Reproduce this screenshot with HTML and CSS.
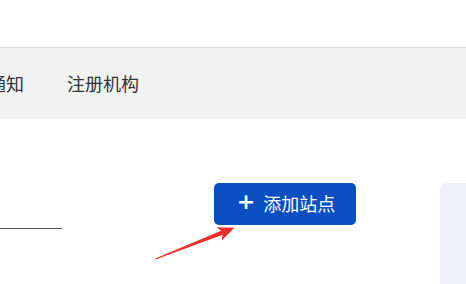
FILE: index.html
```html
<!DOCTYPE html>
<html lang="zh">
<head>
<meta charset="utf-8">
<link rel="stylesheet" href="styles.css">
</head>
<body>
<div class="top"></div>
<nav class="nav">
  <span class="nav-item first">通知</span>
  <span class="nav-item">注册机构</span>
</nav>
<main class="content">
  <div class="field"></div>
  <button class="add-btn"><span class="plus">+</span>添加站点</button>
  <div class="panel"></div>
  <svg class="arrow" width="90" height="45" viewBox="0 0 90 45">
    <polygon points="1.2,35.4 67.1,7.7 62.5,4.3 80.5,4.8 67.7,17.4 68.7,11.8 1.6,36.6" fill="#e8302a"/>
  </svg>
</main>
</body>
</html>
```
FILE: styles.css
```css
html, body {
  margin: 0;
  padding: 0;
  background: #fff;
  font-family: "Noto Sans CJK SC", "Noto Sans", sans-serif;
  overflow: hidden;
}
.top {
  height: 47px;
  border-bottom: 1px solid #dcdcdc;
}
.nav {
  height: 70px;
  background: #f2f2f2;
  display: flex;
  align-items: center;
  gap: 43px;
  padding-bottom: 1px;
}
.nav-item {
  font-size: 18px;
  color: #333;
  line-height: 24px;
}
.nav-item.first {
  margin-left: -12px;
}
.content {
  position: relative;
  display: flex;
  align-items: flex-start;
  padding-top: 64px;
  height: 102px;
}
.field {
  width: 62px;
  height: 45px;
  border-bottom: 1px solid #555;
  flex-shrink: 0;
}
.add-btn {
  margin-left: 152px;
  width: 142px;
  height: 42px;
  flex-shrink: 0;
  border: none;
  border-radius: 5px;
  background: #0a50c2;
  color: #fff;
  font-family: inherit;
  font-size: 18px;
  display: flex;
  align-items: center;
  justify-content: center;
  gap: 8px;
  padding: 0 0 2px 2px;
}
.plus {
  font-size: 22px;
  font-weight: 700;
  line-height: 1;
  margin-top: -2px;
  font-family: "DejaVu Sans", sans-serif;
}
.panel {
  margin-left: 84px;
  flex: 1;
  align-self: stretch;
  background: #f0f0fc;
  border-top-left-radius: 6px;
}
.arrow {
  position: absolute;
  left: 154px;
  top: 104px;
}
```
